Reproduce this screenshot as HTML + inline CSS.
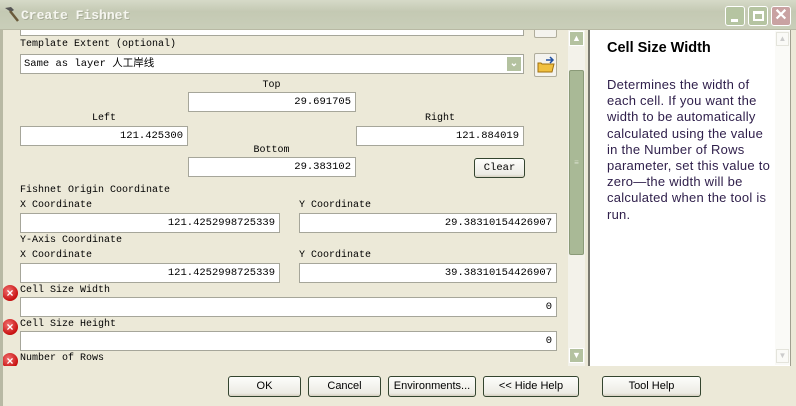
<!DOCTYPE html>
<html><head><meta charset="utf-8"><style>
*{margin:0;padding:0;box-sizing:border-box}
body{width:796px;height:406px;overflow:hidden;background:#ece9d8;position:relative;font-family:"Liberation Mono","Noto Sans CJK SC",monospace;font-size:10px;color:#000}
.a{position:absolute}
.t{position:absolute;white-space:nowrap;line-height:12px}
.in{position:absolute;background:#fff;border:1px solid #a6a69a;height:20px;text-align:right;padding-right:4px;line-height:18px;font-size:10.5px}
.btn{position:absolute;border:1px solid #34452f;border-radius:3px;background:linear-gradient(#fdfdfb,#ecebe4 85%,#d6d0c0);text-align:center;font-family:"Liberation Sans",sans-serif;font-size:11px;line-height:18px;height:21px}
.err{position:absolute;width:16px;height:16px;border-radius:50%;background:radial-gradient(circle at 40% 35%,#f07070,#c81010 70%,#900);color:#fff;font:bold 12px/16px "Liberation Sans",sans-serif;text-align:center}
</style></head><body>
<div class="a" style="left:0;top:0;width:796px;height:30px;background:linear-gradient(#d6dac8,#c4c9b3 40%,#c9ceb9);border-bottom:1px solid #b8b9a4"></div>
<svg class="a" style="left:2px;top:5px" width="18" height="18"><path d="M3 3 L9 2 L12 5 L9 7 Z" fill="#555"/><path d="M8 6 L16 16" stroke="#6a5a3a" stroke-width="2.5"/></svg>
<div class="t" style="left:21px;top:9px;font:bold 13px/13px 'Liberation Mono',monospace;color:#f6f6f0;text-shadow:1px 1px 0 #a8ad98">Create Fishnet</div>
<div class="a" style="left:725px;top:6px;width:20px;height:20px;border:1px solid #fff;border-radius:3px;background:#b5c4a1"><div class="a" style="left:5px;top:12px;width:7px;height:3px;background:#fff"></div></div>
<div class="a" style="left:748px;top:6px;width:20px;height:20px;border:1px solid #fff;border-radius:3px;background:#b5c4a1"><div class="a" style="left:4px;top:4px;width:11px;height:10px;border:2px solid #fff;border-top-width:3px"></div></div>
<div class="a" style="left:771px;top:6px;width:20px;height:20px;border:1px solid #fff;border-radius:3px;background:#c9a2a2;color:#fff;font:bold 16px/18px 'Liberation Sans',sans-serif;text-align:center">✕</div>
<div class="a" style="left:0;top:30px;width:3px;height:376px;background:#b8b9a4"></div>

<div class="a" style="left:3px;top:30px;width:565px;height:336px;overflow:hidden">
 <div class="in" style="left:17px;top:-14px;width:504px"></div>
 <div class="a" style="left:531px;top:-14px;width:23px;height:22px;border:1px solid #b0ad9c;border-radius:2px;background:#f4f3ee"></div>
 <div class="t" style="left:17px;top:9px">Template Extent (optional)</div>
 <div class="in" style="left:17px;top:24px;width:504px;text-align:left;padding-left:3px;font-size:10.5px">Same as layer 人工岸线</div>
 <div class="a" style="left:503px;top:26px;width:16px;height:16px;background:#b4c2a0;border:1px solid #fff;color:#fff;font:bold 10px/14px sans-serif;text-align:center">⌄</div>
 <div class="a" style="left:531px;top:23px;width:23px;height:24px;border:1px solid #b0ad9c;border-radius:2px;background:#f4f3ee"><svg width="21" height="22"><path d="M3 9 L3 18 L17 18 L19 10 L7 10 L6 9 Z" fill="#f0c040" stroke="#a07010"/><path d="M11 6 L17 6 M15 3 L18 6 L15 9" stroke="#2050a0" stroke-width="1.5" fill="none"/></svg></div>
 <div class="t" style="left:185px;top:50px;width:167px;text-align:center">Top</div>
 <div class="in" style="left:185px;top:62px;width:168px">29.691705</div>
 <div class="t" style="left:17px;top:83px;width:168px;text-align:center">Left</div>
 <div class="in" style="left:17px;top:96px;width:168px">121.425300</div>
 <div class="t" style="left:353px;top:83px;width:168px;text-align:center">Right</div>
 <div class="in" style="left:353px;top:96px;width:168px">121.884019</div>
 <div class="t" style="left:185px;top:115px;width:167px;text-align:center">Bottom</div>
 <div class="in" style="left:185px;top:127px;width:168px">29.383102</div>
 <div class="btn" style="left:471px;top:128px;width:51px;height:20px;font:10.5px/18px 'Liberation Mono',monospace">Clear</div>
 <div class="t" style="left:17px;top:155px">Fishnet Origin Coordinate</div>
 <div class="t" style="left:17px;top:170px">X Coordinate</div>
 <div class="t" style="left:296px;top:170px">Y Coordinate</div>
 <div class="in" style="left:17px;top:183px;width:260px">121.4252998725339</div>
 <div class="in" style="left:296px;top:183px;width:258px">29.38310154426907</div>
 <div class="t" style="left:17px;top:205px">Y-Axis Coordinate</div>
 <div class="t" style="left:17px;top:220px">X Coordinate</div>
 <div class="t" style="left:296px;top:220px">Y Coordinate</div>
 <div class="in" style="left:17px;top:233px;width:260px">121.4252998725339</div>
 <div class="in" style="left:296px;top:233px;width:258px">39.38310154426907</div>
 <div class="err" style="left:-1px;top:255px">×</div>
 <div class="t" style="left:17px;top:255px">Cell Size Width</div>
 <div class="in" style="left:17px;top:267px;width:537px">0</div>
 <div class="err" style="left:-1px;top:289px">×</div>
 <div class="t" style="left:17px;top:289px">Cell Size Height</div>
 <div class="in" style="left:17px;top:301px;width:537px">0</div>
 <div class="err" style="left:-1px;top:323px">×</div>
 <div class="t" style="left:17px;top:323px">Number of Rows</div>
</div>
<div class="a" style="left:568px;top:30px;width:17px;height:336px;background:#f3f2ea"></div>
<div class="a" style="left:569px;top:31px;width:15px;height:15px;background:#b4c2a0;border:1px solid #fff;color:#fff;font:bold 9px/13px sans-serif;text-align:center">▲</div>
<div class="a" style="left:569px;top:70px;width:15px;height:185px;background:#a9b996;border:1px solid #8a9a78;border-radius:2px;color:#d8e0cc;font:8px/183px sans-serif;text-align:center">≡</div>
<div class="a" style="left:569px;top:348px;width:15px;height:15px;background:#b4c2a0;border:1px solid #fff;color:#fff;font:bold 9px/13px sans-serif;text-align:center">▼</div>
<div class="a" style="left:588px;top:30px;width:203px;height:336px;background:#fff;border-left:2px solid #7a7a70;border-right:1px solid #a0a090"></div>
<div class="a" style="left:775px;top:31px;width:15px;height:334px;background:#fafaf7"></div>
<div class="a" style="left:776px;top:32px;width:13px;height:14px;border:1px solid #e4e4dc;color:#ccc;font:8px/12px sans-serif;text-align:center">▲</div>
<div class="a" style="left:776px;top:349px;width:13px;height:14px;border:1px solid #e4e4dc;color:#ccc;font:8px/12px sans-serif;text-align:center">▼</div>
<div class="t" style="left:607px;top:40px;font:bold 14.5px/16px 'Liberation Sans',sans-serif">Cell Size Width</div>
<div class="a" style="left:607px;top:77px;white-space:nowrap;font:13px/16.2px 'Liberation Sans',sans-serif;letter-spacing:0.25px;color:#2e1e4a">Determines the width of<br>each cell. If you want the<br>width to be automatically<br>calculated using the value<br>in the Number of Rows<br>parameter, set this value to<br>zero—the width will be<br>calculated when the tool is<br>run.</div>
<div class="btn" style="left:228px;top:376px;width:73px">OK</div>
<div class="btn" style="left:308px;top:376px;width:73px">Cancel</div>
<div class="btn" style="left:388px;top:376px;width:88px">Environments...</div>
<div class="btn" style="left:483px;top:376px;width:96px">&lt;&lt; Hide Help</div>
<div class="btn" style="left:602px;top:376px;width:99px">Tool Help</div>
</body></html>
